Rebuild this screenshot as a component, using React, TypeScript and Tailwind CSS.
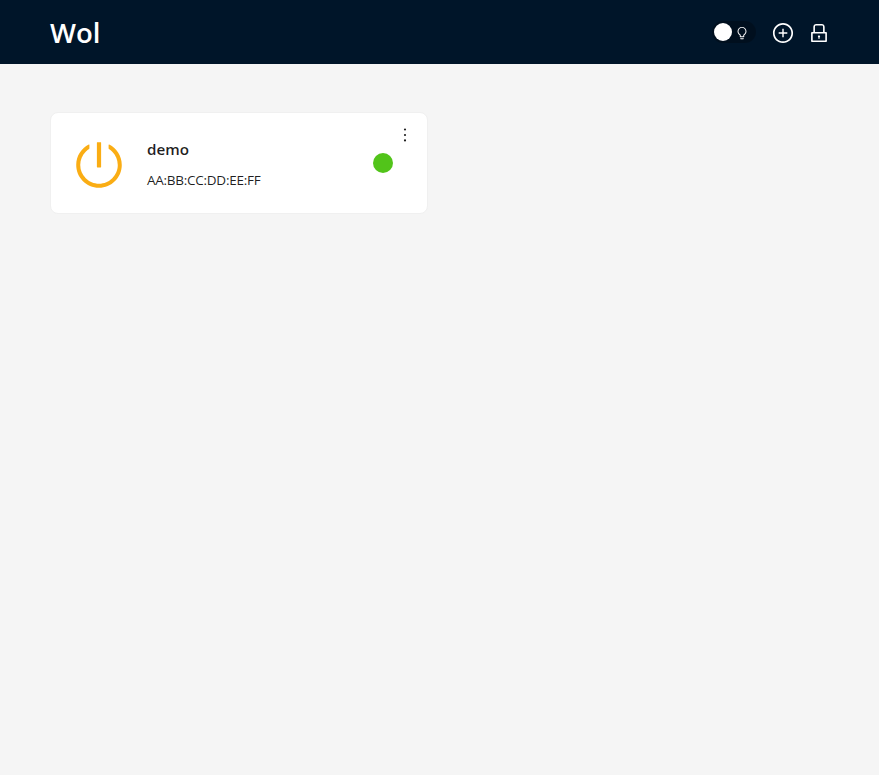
import { AiOutlineBulb, AiOutlineLock, AiOutlineMore, AiOutlinePlusCircle, AiOutlinePoweroff } from "react-icons/ai";

function Header() {
  return (
    <header className="flex h-16 items-center justify-between bg-[#001529] px-[50px] text-white">
      <h1 className="mt-px text-[27.5px] font-semibold leading-none">Wol</h1>
      <div className="flex items-center">
        <button className="mr-[15px] flex h-[22px] w-11 items-center rounded-full bg-black/25 pl-0.5">
          <span className="size-[18px] rounded-full bg-white" />
          <AiOutlineBulb size={14} className="ml-[3px] mt-px" />
        </button>
        <button className="mr-3 mt-0.5"><AiOutlinePlusCircle size={24} className="scale-[0.96]" /></button>
        <button className="-mr-[2px] mt-0.5"><AiOutlineLock size={24} className="scale-[0.96]" /></button>
      </div>
    </header>
  );
}

function DeviceCard({ name, mac }: { name: string; mac: string }) {
  return (
    <article className="flex h-[102px] w-[378px] rounded-lg border border-[#f0f0f0] bg-white">
      <AiOutlinePoweroff size={54} className="ml-[21px] mt-[25px] shrink-0 text-[#faad14]" />
      <div className="ml-[21px] mt-6 grow">
        <h2 className="text-[15.2px] font-[550] leading-6 text-black/88">{name}</h2>
        <p className="mt-2 text-[13.5px] leading-[22px] tracking-[-0.26px] text-black/88">{mac}</p>
      </div>
      <span className="mt-10 size-5 shrink-0 rounded-full bg-[#52c41a]" />
      <button className="ml-[2px] mr-3 mt-3 h-5"><AiOutlineMore size={20} /></button>
    </article>
  );
}

export default function App() {
  return (
    <div className="min-h-screen bg-[#f5f5f5] font-['Open_Sans','Noto_Sans',sans-serif] text-black/88">
      <Header />
      <main className="px-[50px] pt-12">
        <DeviceCard name="demo" mac="AA:BB:CC:DD:EE:FF" />
      </main>
    </div>
  );
}
